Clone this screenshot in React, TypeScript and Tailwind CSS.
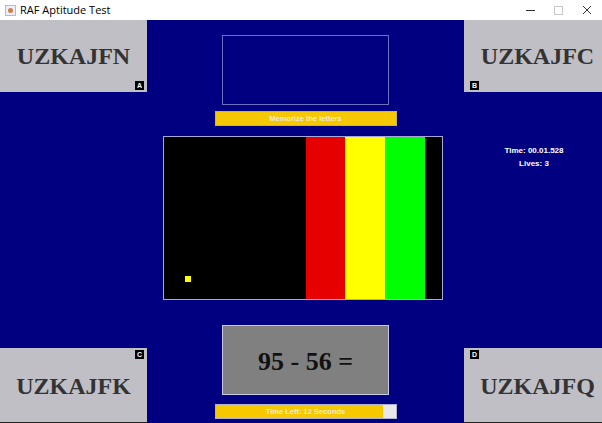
import React from "react";

const stripes = [
  { w: "w-[142px]", c: "bg-black" },
  { w: "w-[39px]", c: "bg-[#e60000]" },
  { w: "w-[40px]", c: "bg-[#ffff00]" },
  { w: "w-[40px]", c: "bg-[#00ff00]" },
  { w: "w-[17px]", c: "bg-black" },
];

const LetterPanel = ({
  text,
  badge,
  corner,
  tall,
}: {
  text: string;
  badge: string;
  corner: "br" | "bl" | "tr" | "tl";
  tall?: boolean;
}) => {
  const pos = {
    br: "right-[3px] bottom-[2px]",
    bl: "left-[6px] bottom-[2px]",
    tr: "right-[3px] top-[2px]",
    tl: "left-[6px] top-[2px]",
  }[corner];
  return (
    <div
      className={`relative w-[147px] ${tall ? "h-[74px] pt-[1px]" : "h-[72px]"} shrink-0 bg-[#c0bfc6] flex items-center justify-center`}
    >
      <span className="text-[24px] font-bold text-[#333333] font-['Liberation_Serif',serif] leading-none">
        {text}
      </span>
      <span
        className={`absolute ${pos} w-[9px] h-[9px] bg-black text-white text-[7px] font-bold leading-[9px] text-center font-['Liberation_Sans',sans-serif]`}
      >
        {badge}
      </span>
    </div>
  );
};

export default function App() {
  return (
    <div className="w-[602px] h-[423px] overflow-hidden bg-white font-['Liberation_Sans',sans-serif]">
      {/* title bar */}
      <div className="h-[20px] flex items-center bg-white">
        <div className="ml-[5px] w-[11px] h-[11px] border border-[#b8b8c8] bg-[#eef] flex items-center justify-center">
          <div className="w-[5px] h-[5px] bg-[#d08040] rounded-full" />
        </div>
        <span className="ml-[4px] text-[11px] text-black font-['Open_Sans',sans-serif]">
          RAF Aptitude Test
        </span>
        <div className="ml-auto flex items-center h-full">
          <div className="w-[28px] flex justify-center">
            <div className="w-[9px] h-px bg-[#333]" />
          </div>
          <div className="w-[28px] flex justify-center">
            <div className="w-[9px] h-[9px] border border-[#c8c8c8]" />
          </div>
          <div className="w-[30px] flex justify-center">
            <svg width="10" height="10" viewBox="0 0 10 10">
              <path d="M1 1 L9 9 M9 1 L1 9" stroke="#333" strokeWidth="1" />
            </svg>
          </div>
        </div>
      </div>

      {/* content */}
      <div className="h-[403px] bg-[#000080] flex overflow-hidden">
        {/* left column */}
        <div className="w-[147px] shrink-0 flex flex-col justify-between">
          <LetterPanel text="UZKAJFN" badge="A" corner="br" />
          <div className="border-b border-[#202020]">
            <LetterPanel text="UZKAJFK" badge="C" corner="tr" tall />
          </div>
        </div>

        {/* center column */}
        <div className="w-[317px] shrink-0 flex flex-col items-center">
          <div className="mt-[15px] w-[167px] h-[70px] border border-[#6f6fc0]" />
          <div className="mt-[6px] w-[182px] h-[15px] bg-[#f5c800] border border-[#c8b060] flex items-center justify-center">
            <span className="text-[7.5px] font-bold text-[#f4ecd0]">Memorize the letters</span>
          </div>
          <div className="mt-[10px] mr-[5px] relative w-[280px] h-[164px] border border-[#a8a8d8] flex">
            {stripes.map((s, i) => (
              <div key={i} className={`${s.w} h-full ${s.c}`} />
            ))}
            <div className="absolute left-[21px] top-[139px] w-[6px] h-[6px] bg-[#ffff00]" />
          </div>
          <div className="mt-[25px] w-[167px] h-[70px] bg-[#808080] border border-[#c8c8e8] flex items-center justify-center">
            <span className="mt-[4px] text-[26px] font-bold text-[#111] font-['Liberation_Serif',serif] leading-none">
              95 - 56 =
            </span>
          </div>
          <div className="mt-[9px] w-[182px] h-[15px] bg-[#e8e8ec] border border-[#b0b0d0] relative flex">
            <div className="w-[167px] h-full bg-[#f5c800]" />
            <span className="absolute inset-0 flex items-center justify-center text-[7.5px] font-bold text-[#f4ecd0]">
              Time Left: 12 Seconds
            </span>
          </div>
        </div>

        {/* right column */}
        <div className="w-[147px] shrink-0 flex flex-col justify-between">
          <LetterPanel text="UZKAJFC" badge="B" corner="bl" />
          <div className="flex-1 flex flex-col items-center pt-[52px] pr-[7px] text-white text-[8px] font-bold leading-[13px]">
            <span>Time: 00.01.528</span>
            <span>Lives: 3</span>
          </div>
          <div className="border-b border-[#202020]">
            <LetterPanel text="UZKAJFQ" badge="D" corner="tl" tall />
          </div>
        </div>
      </div>
    </div>
  );
}
